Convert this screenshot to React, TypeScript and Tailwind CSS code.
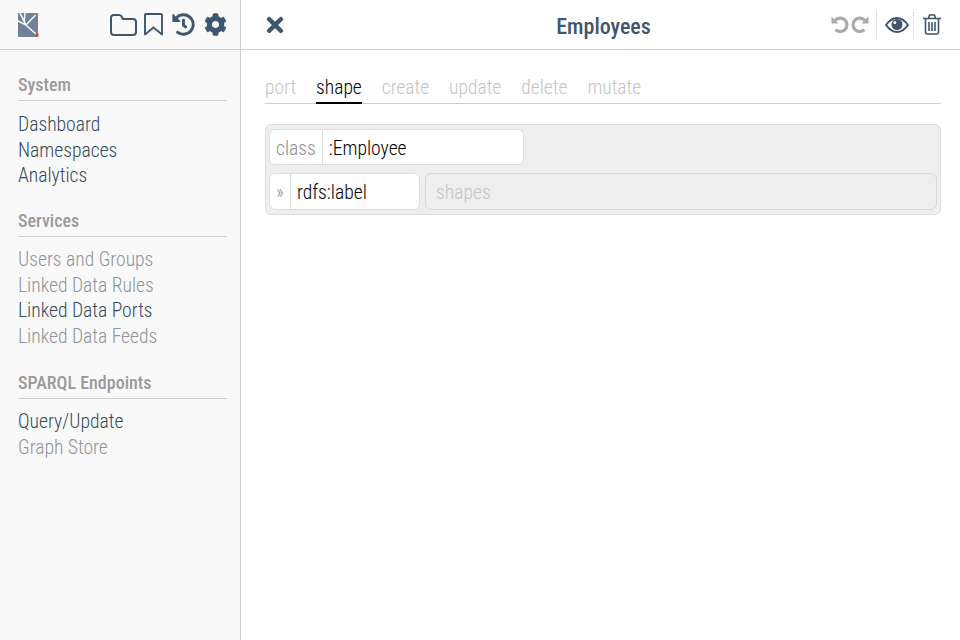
import React from "react";
import { FaHistory, FaCog, FaTimes } from "react-icons/fa";

function Logo() {
  return (
    <svg width="21" height="24" viewBox="0 0 21 24" className="shrink-0">
      <rect x="0" y="0" width="20" height="24" rx="1" fill="#6f8399" />
      <path d="M19 22 L8 12 L2 0 M8 12 L0 8 M6.2 8 L7 0 M8 12 L17.5 2" stroke="#f9f9f9" strokeWidth="1.5" fill="none" />
      <rect x="17.5" y="20.5" width="3" height="3" fill="#f03a17" />
    </svg>
  );
}

function Folder() {
  return (
    <svg width="27" height="22" viewBox="0 0 27 22" fill="none" stroke="#3f566f" strokeWidth="2" className="shrink-0">
      <path d="M1 4 Q1 1 4 1 H9 Q11 1 12 3 L13 5 H23 Q26 5 26 8 V18 Q26 21 23 21 H4 Q1 21 1 18 Z" strokeLinejoin="round" />
    </svg>
  );
}

function Bookmark() {
  return (
    <svg width="19" height="23" viewBox="0 0 19 23" fill="none" stroke="#3f566f" strokeWidth="1.9" className="shrink-0">
      <path d="M1 2 Q1 1 2 1 H17 Q18 1 18 2 V21.5 L9.5 14.5 L1 21.5 Z" strokeLinejoin="round" />
    </svg>
  );
}

function Undo({ flip }: { flip?: boolean }) {
  return (
    <svg width="18" height="17" viewBox="0 0 18 17" className={flip ? "shrink-0 -scale-x-100" : "shrink-0"}>
      <path d="M4.2 4.4 A6.7 6.7 0 1 1 4.6 13.6" fill="none" stroke="#aaaaaa" strokeWidth="3.2" />
      <path d="M0.5 0.5 L0.5 7.5 L7.5 7.5 Z" fill="#aaaaaa" />
    </svg>
  );
}

function Eye() {
  return (
    <svg width="24" height="16" viewBox="0 0 24 16" className="shrink-0">
      <path d="M1 8 Q6 1 12 1 Q18 1 23 8 Q18 15 12 15 Q6 15 1 8 Z" fill="none" stroke="#3f566f" strokeWidth="2" />
      <circle cx="12" cy="7.5" r="5.5" fill="#3f566f" />
      <circle cx="9.8" cy="5.5" r="1.5" fill="#ffffff" />
    </svg>
  );
}

function Trash() {
  return (
    <svg width="18" height="21" viewBox="0 0 18 21" fill="none" stroke="#3f566f" strokeWidth="1.6" className="shrink-0">
      <path d="M0 4.5 H18 M2.5 4.5 V18 Q2.5 20 4.5 20 H13.5 Q15.5 20 15.5 18 V4.5 M5.5 4.5 L6.5 1 H11.5 L12.5 4.5 M6 8 V17 M9 8 V17 M12 8 V17" />
    </svg>
  );
}

function Section({ title, items, className, titleClass }: { title: string; items: [string, boolean][]; className: string; titleClass: string }) {
  return (
    <div className={className}>
      <div className={`text-[18px] leading-[26px] font-medium [font-stretch:75%] text-[#9a9a9a] border-b border-[#cccccc] h-[29px] ${titleClass}`}>{title}</div>
      {items.map(([t, on]) => (
        <div key={t} className={`text-[19.6px] leading-[25.7px] font-light [font-stretch:75%] ${on ? "text-[#34495e]" : "text-[#8e9499]"}`}>{t}</div>
      ))}
    </div>
  );
}

export default function App() {
  return (
    <div className="flex w-[960px] h-[640px] bg-white overflow-hidden" style={{ fontFamily: "Roboto, sans-serif" }}>
      <aside className="w-[241px] shrink-0 bg-[#f9f9f9] border-r border-[#cccccc] flex flex-col">
        <div className="h-[50px] border-b border-[#cccccc] flex items-center pl-[18px] pr-[13px] shrink-0">
          <Logo />
          <div className="ml-auto flex items-center text-[#3f566f]">
            <Folder />
            <span className="ml-[7px]"><Bookmark /></span>
            <FaHistory size={23} className="ml-[9px]" />
            <FaCog size={23} className="ml-[9px]" />
          </div>
        </div>
        <div className="pt-[22px] pl-[18px] pr-[13px]">
          <Section className="mb-[19px]" titleClass="mb-[10.9px]" title="System" items={[["Dashboard", true], ["Namespaces", true], ["Analytics", true]]} />
          <Section className="mb-[20.2px]" titleClass="mb-[10px]" title="Services" items={[["Users and Groups", false], ["Linked Data Rules", false], ["Linked Data Ports", true], ["Linked Data Feeds", false]]} />
          <Section className="mb-[20px]" titleClass="mb-[10px]" title="SPARQL Endpoints" items={[["Query/Update", true], ["Graph Store", false]]} />
        </div>
      </aside>
      <main className="flex-1 flex flex-col min-w-0">
        <header className="h-[50px] border-b border-[#cccccc] flex items-center pl-[22px] pr-[19px] shrink-0">
          <div className="w-[119px] shrink-0"><FaTimes size={24} className="text-[#3f566f]" /></div>
          <div className="flex-1 text-center text-[22px] leading-[26px] pt-[4px] font-medium [font-stretch:75%] text-[#3f566f]">Employees</div>
          <div className="flex items-center justify-end w-[116px] shrink-0">
            <Undo />
            <span className="ml-[2px]"><Undo flip /></span>
            <div className="h-[26px] border-l border-dotted border-[#cccccc] ml-[7px]" />
            <span className="ml-[8px]"><Eye /></span>
            <div className="h-[26px] border-l border-dotted border-[#cccccc] ml-[4px]" />
            <span className="ml-[9px]"><Trash /></span>
          </div>
        </header>
        <div className="pl-[24px] pr-[19px] pt-[24px]">
          <div className="flex gap-[20px] border-b border-[#cccccc] h-[30px] text-[19.5px] font-light [font-stretch:75%] leading-[27px] text-[#c4c4c4]">
            <span>port</span>
            <span className="text-black border-b-2 border-black h-[30px]">shape</span>
            <span>create</span>
            <span>update</span>
            <span>delete</span>
            <span>mutate</span>
          </div>
          <div className="mt-[20px] bg-[#eeeeee] border border-[#dddddd] rounded-[6px] p-[3px] pt-[4px] flex flex-col gap-[8px] h-[91px]">
            <div className="flex w-[255px] h-[36px] bg-white border border-[#dddddd] rounded-[6px] text-[19.6px] font-light [font-stretch:75%] leading-[37px]">
              <span className="px-[6px] text-[#8e8e8e] border-r border-[#dddddd]">class</span>
              <span className="px-[6px] text-black">:Employee</span>
            </div>
            <div className="flex gap-[5px]">
              <div className="flex w-[151px] h-[37px] bg-white border border-[#dddddd] rounded-[6px] text-[19.6px] font-light [font-stretch:75%] leading-[38px]">
                <span className="px-[6px] text-[#8e8e8e] border-r border-[#dddddd]">»</span>
                <span className="px-[6px] text-black">rdfs:label</span>
              </div>
              <div className="flex-1 h-[37px] bg-[#eeeeee] border border-[#d8d8d8] rounded-[6px] text-[19.6px] font-light [font-stretch:75%] leading-[38px] px-[10px] text-[#c4c4c4]">shapes</div>
            </div>
          </div>
        </div>
      </main>
    </div>
  );
}
